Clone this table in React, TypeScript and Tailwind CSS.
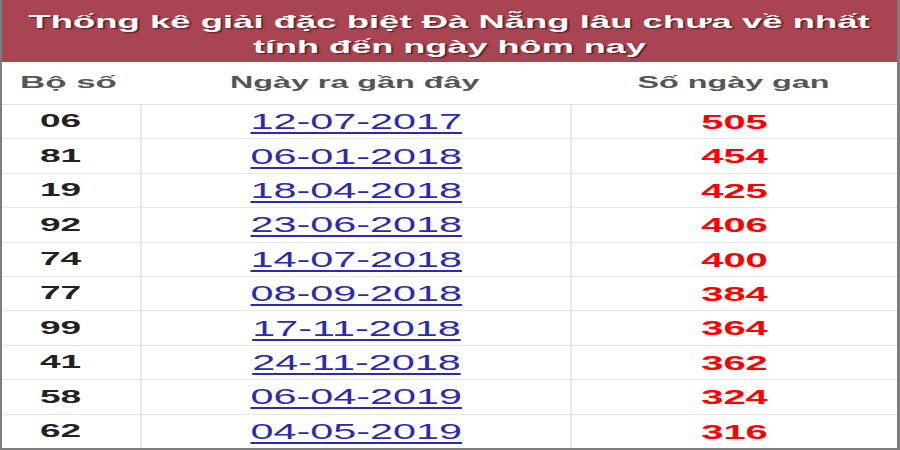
import React from "react";

const rows: [string, string, string][] = [
  ["06", "12-07-2017", "505"],
  ["81", "06-01-2018", "454"],
  ["19", "18-04-2018", "425"],
  ["92", "23-06-2018", "406"],
  ["74", "14-07-2018", "400"],
  ["77", "08-09-2018", "384"],
  ["99", "17-11-2018", "364"],
  ["41", "24-11-2018", "362"],
  ["58", "06-04-2019", "324"],
  ["62", "04-05-2019", "316"],
];

// the source picture is squeezed wide, so glyphs get a horizontal stretch
const Wide: React.FC<{ children: React.ReactNode; left?: boolean; className?: string }> = ({ children, left, className }) => (
  <span className={`inline-block whitespace-nowrap ${left ? "origin-left" : "origin-center"} ${className ?? "scale-x-[1.9]"}`}>
    {children}
  </span>
);

export default function App() {
  return (
    <div className="w-[900px] h-[450px] flex flex-col bg-white border-l-2 border-r-[3px] border-b-2 border-[#7d7d7d] overflow-hidden font-['Liberation_Sans',Arial,sans-serif]">
      <header className="h-[62px] shrink-0 bg-[#a94452] flex flex-col items-center pt-[9px] text-white font-bold text-[19px] leading-[25px] [text-shadow:1px_1px_1px_rgba(40,0,10,0.6)]">
        <Wide className="scale-x-[1.92]">Thống kê giải đặc biệt Đà Nẵng lâu chưa về nhất</Wide>
        <Wide>tính đến ngày hôm nay</Wide>
      </header>

      <div className="h-[43px] shrink-0 grid grid-cols-[138px_430px_1fr] items-center border-b border-[#e2e2e2] text-[#555] font-bold text-[17px]">
        <div className="pl-[18px]">
          <Wide left className="scale-x-[2.05]">Bộ số</Wide>
        </div>
        <div className="text-center">
          <Wide>Ngày ra gần đây</Wide>
        </div>
        <div className="text-center">
          <Wide>Số ngày gan</Wide>
        </div>
      </div>

      <div className="flex-1 flex flex-col">
        {rows.map(([num, date, days], i) => (
          <div
            key={num}
            className={`flex-1 grid grid-cols-[138px_430px_1fr] items-center ${i < rows.length - 1 ? "border-b border-[#e6e6e6]" : ""}`}
          >
            <div className="h-full flex items-center pl-[38px] text-[#222] font-bold text-[19px]">
              <Wide left className="scale-x-[1.95]">{num}</Wide>
            </div>
            <div className="h-full flex items-center justify-center border-l-2 border-[#e8e8e8] text-[22px]">
              <a href="#" className="text-[#2b2bb0]">
                <Wide className="scale-x-[1.88] underline decoration-[1.5px] underline-offset-[3px]">{date}</Wide>
              </a>
            </div>
            <div className="h-full flex items-center justify-center border-l-2 border-[#e8e8e8] text-[#ff0000] font-bold text-[21px]">
              <Wide>{days}</Wide>
            </div>
          </div>
        ))}
      </div>
    </div>
  );
}
